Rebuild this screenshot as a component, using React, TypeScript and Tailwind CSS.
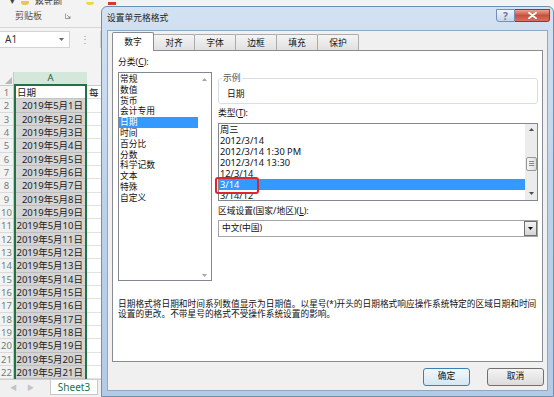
import React from "react";

const categories = ["常规", "数值", "货币", "会计专用", "日期", "时间", "百分比", "分数", "科学记数", "文本", "特殊", "自定义"];
const types = ["周三", "2012/3/14", "2012/3/14 1:30 PM", "2012/3/14 13:30", "12/3/14", "3/14", "3/14/12"];
const tabs = ["数字", "对齐", "字体", "边框", "填充", "保护"];
const rows = Array.from({ length: 22 }, (_, i) => (i === 0 ? "日期" : `2019年5月${i}日`));

function Tri({ up, color = "#4d4d4d" }: { up?: boolean; color?: string }) {
    return (
        <svg width="5" height="3" viewBox="0 0 5 3">
            <path d={up ? "M0 3 L2.5 0 L5 3 Z" : "M0 0 L5 0 L2.5 3 Z"} fill={color} />
        </svg>
    );
}

function Sheet() {
    return (
        <div className="flex flex-col w-[554px]">
            {/* Ribbon */}
            <div className="h-[28px] bg-[#f3f3f3] border-b border-[#d6d6d6] flex flex-col">
                <div className="h-[5px] flex items-end gap-[6px] pl-[10px] overflow-hidden text-[9px] leading-[11px] text-[#444]">
                    <span className="-mb-[1px]">▾</span>
                    <span className="w-[8px] h-[4px] bg-[#e8c45a] rounded-b-[3px]" />
                    <span className="mb-[-3px]">格式刷</span>
                    <span className="ml-[18px] w-[8px] h-[3px] bg-[#f1d64a] rounded-b-full" />
                    <span className="ml-[8px] w-[8px] h-[3px] bg-[#d63a2a]" />
                </div>
                <div className="flex items-center h-[24px] pl-[15px] text-[9px] text-[#555]">
                    <span>剪贴板</span>
                    <svg className="ml-[23px]" width="6" height="6" viewBox="0 0 6 6">
                        <path d="M0.5 0.5 V5.5 H5.5" fill="none" stroke="#888" strokeWidth="0.8" />
                        <path d="M2 2 L5 5 M5 3 V5 H3" fill="none" stroke="#888" strokeWidth="0.8" />
                    </svg>
                </div>
            </div>

            {/* Name box / formula bar */}
            <div className="h-[22px] bg-[#f3f3f3] flex items-center gap-[6px]">
                <div className="w-[70px] h-[17px] bg-white border border-[#d4d4d4] border-l-0 flex items-center justify-between px-[5px] text-[10px] text-[#333]">
                    <span>A1</span>
                    <Tri color="#666" />
                </div>
                <span className="text-[#999] text-[10px] ml-[4px]">⋮</span>
                <div className="flex-1 h-[17px] bg-white border border-[#d4d4d4] ml-[4px]" />
            </div>
            <div className="h-[22px] bg-[#f3f3f3]" />

            {/* Grid */}
            <div className="flex text-[9.5px] text-[#222]">
                <div className="w-[14px] flex flex-col bg-[#f3f3f3] border-r border-[#c9c9c9]">
                    <div className="h-[14px] border-b border-[#c9c9c9] flex items-end justify-end p-[1px]">
                        <svg width="7" height="7" viewBox="0 0 7 7"><path d="M7 0 V7 H0 Z" fill="#b8b8b8" /></svg>
                    </div>
                    {rows.map((_, i) => (
                        <div key={i} className="h-[13.33px] leading-[13px] text-center text-[#6f7f78] border-b border-[#dadada]">
                            {i + 1}
                        </div>
                    ))}
                </div>
                <div className="w-[73px] flex flex-col">
                    <div className="h-[14px] bg-[#d3e8db] border-b-2 border-[#217346] text-center leading-[12px] text-[#2b5e42]">A</div>
                    <div className="flex flex-col border-x-2 border-[#217346]">
                        {rows.map((r, i) => (
                            <div
                                key={i}
                                className={
                                    i === 0
                                        ? "h-[13.33px] leading-[13px] bg-white pl-[1px] border-b border-[#c4c4c4]"
                                        : "h-[13.33px] leading-[13px] bg-[#d4d4d4] text-right pr-[2px] border-b border-[#bdbdbd]"
                                }
                            >
                                {r}
                            </div>
                        ))}
                    </div>
                </div>
                <div className="flex-1 flex flex-col">
                    <div className="h-[14px] bg-[#f3f3f3] border-b border-[#c9c9c9]" />
                    {rows.map((_, i) => (
                        <div key={i} className="h-[13.33px] leading-[13px] pl-[2px] border-b border-[#e1e1e1]">
                            {i === 0 ? "每" : ""}
                        </div>
                    ))}
                </div>
            </div>

            {/* Sheet tabs */}
            <div className="h-[18px] bg-[#f0f0f0] border-t border-[#d0d0d0] flex items-start text-[10px]">
                <span className="ml-[10px] mt-[3px] text-[#c4c4c4] text-[7px]">◀</span>
                <span className="ml-[10px] mt-[3px] text-[#c4c4c4] text-[7px]">▶</span>
                <div className="ml-[16px] w-[48px] h-[15px] bg-white border-x border-b border-[#c8c8c8] text-center leading-[15px] text-[#217346]">
                    Sheet3
                </div>
            </div>
        </div>
    );
}

function Dialog() {
    return (
        <div className="absolute left-[101px] top-[6px] w-[453px] h-[391px] border border-[#6f8fb5] rounded-t-[6px] bg-gradient-to-b from-[#d2e2f3] via-[#bcd2eb] to-[#b4cbe5] flex flex-col text-[8.75px] text-[#111]">
            {/* Title bar */}
            <div className="h-[23px] flex items-start">
                <span className="pl-[5px] pt-[6px] leading-[11px] text-[#1b1b1b]">设置单元格格式</span>
                <div className="ml-auto mr-[3px] mt-[2px] flex">
                    <div className="w-[19px] h-[13px] rounded-bl-[3px] border border-[#7290b4] bg-gradient-to-b from-[#eef4fb] to-[#c6d7ea] flex items-center justify-center text-[10px] leading-none font-bold text-[#6a7a90]">
                        ?
                    </div>
                    <div className="w-[35px] h-[13px] rounded-br-[3px] border border-l-0 border-[#8a3a30] bg-gradient-to-b from-[#e9a294] via-[#c9503e] to-[#d8705d] flex items-center justify-center">
                        <svg width="9" height="7" viewBox="0 0 9 7">
                            <path d="M1 0.8 L8 6.2 M8 0.8 L1 6.2" stroke="white" strokeWidth="1.8" strokeLinecap="round" />
                        </svg>
                    </div>
                </div>
            </div>

            {/* Client */}
            <div className="ml-[5px] w-[441px] h-[361px] bg-[#f0f0f0] border border-[#8fa8c4] pt-[1px] pl-[4px] flex flex-col">
                <div className="h-[18px] flex items-end">
                    {tabs.map((t, i) =>
                        i === 0 ? (
                            <div key={t} className="relative z-10 w-[42px] h-[19px] -mb-[1px] bg-white border border-b-0 border-[#898c95] rounded-t-[2px] text-center leading-[18px]">
                                {t}
                            </div>
                        ) : (
                            <div key={t} className="w-[42px] h-[16px] -ml-px bg-gradient-to-b from-[#f4f4f4] to-[#e1e1e1] border border-b-0 border-[#acacac] rounded-t-[2px] text-center leading-[16px]">
                                {t}
                            </div>
                        )
                    )}
                </div>

                {/* Tab page */}
                <div className="w-[431px] h-[312px] bg-white border border-[#898c95] flex flex-col">
                    <div className="flex items-start pt-[6px] pl-[5px] gap-[6px]">
                        <div className="w-[94px] flex flex-col">
                            <span className="leading-[11px]">分类(<u>C</u>):</span>
                            <div className="mt-[4px] h-[209px] border border-[#828790] bg-white flex">
                                <div className="flex-1 pt-[1px] flex flex-col">
                                    {categories.map((c) => (
                                        <div
                                            key={c}
                                            className={
                                                c === "日期"
                                                    ? "h-[10.8px] leading-[10.8px] px-[1px] bg-[#3399ff] text-white"
                                                    : "h-[10.8px] leading-[10.8px] px-[1px]"
                                            }
                                        >
                                            {c}
                                        </div>
                                    ))}
                                </div>
                                <div className="w-[13px] flex flex-col items-center justify-between pt-[5px] pb-[3px]">
                                    <Tri up color="#a6a6a6" />
                                    <Tri color="#a6a6a6" />
                                </div>
                            </div>
                        </div>

                        <div className="w-[320px] flex flex-col">
                            <fieldset className="mt-[15.5px] border border-[#d5dfe5] rounded-[3px] px-[8px] pt-[5px] pb-[3.5px]">
                                <legend className="-ml-[5px] px-[1px] leading-[11px] text-[#555]">示例</legend>
                                <div className="leading-[11px]">日期</div>
                            </fieldset>
                            <span className="mt-[4px] leading-[11px]">类型(<u>T</u>):</span>
                            <div className="relative mt-[3.5px]">
                                <div className="h-[78px] border border-[#828790] bg-white flex overflow-hidden text-[9.25px]">
                                    <div className="flex-1 flex flex-col">
                                        {types.map((t) => (
                                            <div
                                                key={t}
                                                className={
                                                    t === "3/14"
                                                        ? "h-[11px] shrink-0 leading-[11px] px-[1px] bg-[#3399ff] text-white whitespace-nowrap"
                                                        : "h-[11px] shrink-0 leading-[11px] px-[1px] whitespace-nowrap"
                                                }
                                            >
                                                {t}
                                            </div>
                                        ))}
                                    </div>
                                    <div className="w-[12px] bg-[#ececec] flex flex-col items-center">
                                        <div className="h-[12px] flex items-center"><Tri up /></div>
                                        <div className="mt-[21px] w-[11px] h-[14px] border border-[#979797] rounded-[2px] bg-gradient-to-r from-[#f6f6f6] to-[#dcdcdc] flex flex-col items-center justify-center gap-[1px]">
                                            <span className="w-[5px] h-px bg-[#8a8a8a]" />
                                            <span className="w-[5px] h-px bg-[#8a8a8a]" />
                                            <span className="w-[5px] h-px bg-[#8a8a8a]" />
                                        </div>
                                        <div className="mt-auto h-[12px] flex items-center"><Tri /></div>
                                    </div>
                                </div>
                                <div className="absolute left-[-3px] top-[54px] w-[44px] h-[17px] border-2 border-[#e0242b] rounded-[3px]" />
                            </div>
                            <span className="mt-[5.5px] leading-[11px]">区域设置(国家/地区)(<u>L</u>):</span>
                            <div className="mt-[2.5px] h-[17px] border border-[#a5a5a5] bg-white flex">
                                <span className="flex-1 pl-[3px] leading-[15px]">中文(中国)</span>
                                <div className="w-[13px] border border-[#707070] bg-gradient-to-b from-[#f3f3f3] to-[#d5d5d5] flex items-center justify-center">
                                    <Tri color="#111" />
                                </div>
                            </div>
                        </div>
                    </div>

                    <div className="mt-[18px] pl-[5px] text-[8.7px] leading-[10px] whitespace-nowrap">
                        <div>日期格式将日期和时间系列数值显示为日期值。以星号(*)开头的日期格式响应操作系统特定的区域日期和时间</div>
                        <div>设置的更改。不带星号的格式不受操作系统设置的影响。</div>
                    </div>
                </div>

                {/* Buttons */}
                <div className="mt-[6px] flex justify-end gap-[17px] pr-[3px]">
                    <button className="w-[47px] h-[18px] border border-[#3c7fb1] rounded-[3px] bg-gradient-to-b from-[#f2f8fc] to-[#d6e6f1] text-[8.75px]">
                        确定
                    </button>
                    <button className="w-[57px] h-[18px] border border-[#707070] rounded-[3px] bg-gradient-to-b from-[#f4f4f4] to-[#dcdcdc] text-[8.75px]">
                        取消
                    </button>
                </div>
            </div>
        </div>
    );
}

export default function App() {
    return (
        <div className="relative w-[554px] h-[397px] overflow-hidden bg-white font-['Noto_Sans','Noto_Sans_CJK_SC',sans-serif]">
            <Sheet />
            <Dialog />
        </div>
    );
}
